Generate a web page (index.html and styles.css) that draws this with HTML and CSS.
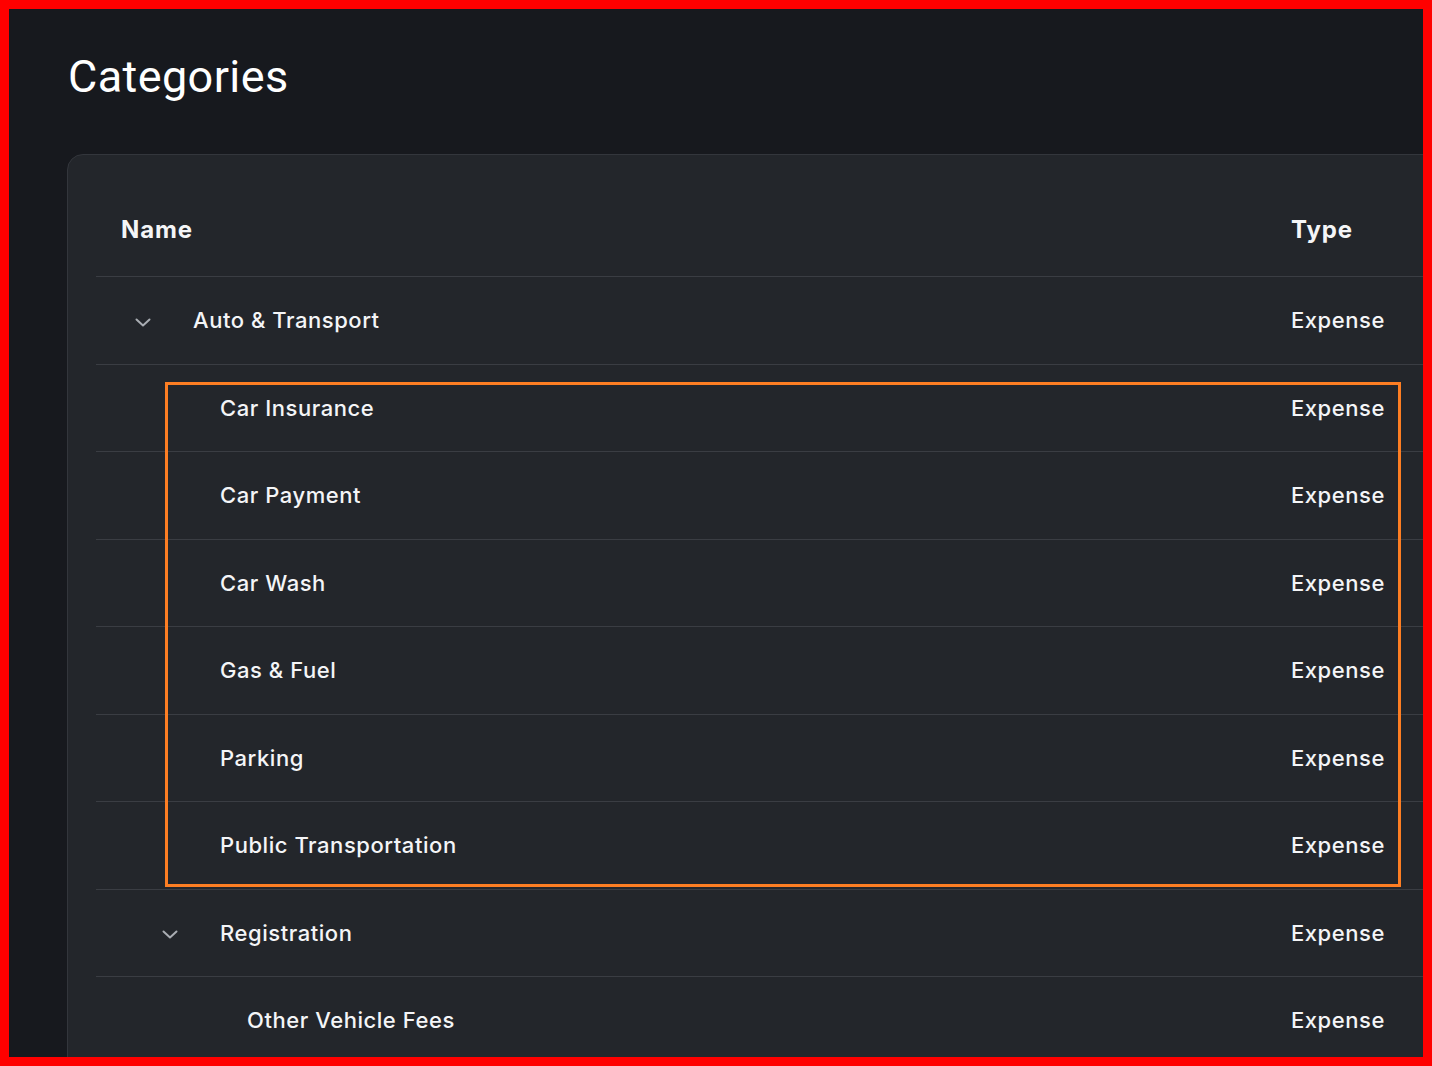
FILE: index.html
```html
<!DOCTYPE html>
<html lang="en">
<head>
<meta charset="utf-8">
<title>Categories</title>
<link rel="stylesheet" href="styles.css">
</head>
<body>
<main class="page">
  <h1 class="title">Categories</h1>
  <section class="card">
    <div class="table">
      <div class="row head">
        <div class="cell name">Name</div>
        <div class="cell type">Type</div>
      </div>
      <div class="row">
        <div class="cell name lvl0"><span class="chev"><svg viewBox="0 0 20 20" width="20" height="20"><path d="M3.5 7.5L10 13.5L16.5 7.5" fill="none" stroke="currentColor" stroke-width="2" stroke-linecap="round" stroke-linejoin="round"/></svg></span>Auto &amp; Transport</div>
        <div class="cell type">Expense</div>
      </div>
      <div class="row">
        <div class="cell name lvl1"><span class="chev"></span>Car Insurance</div>
        <div class="cell type">Expense</div>
      </div>
      <div class="row">
        <div class="cell name lvl1"><span class="chev"></span>Car Payment</div>
        <div class="cell type">Expense</div>
      </div>
      <div class="row">
        <div class="cell name lvl1"><span class="chev"></span>Car Wash</div>
        <div class="cell type">Expense</div>
      </div>
      <div class="row">
        <div class="cell name lvl1"><span class="chev"></span>Gas &amp; Fuel</div>
        <div class="cell type">Expense</div>
      </div>
      <div class="row">
        <div class="cell name lvl1"><span class="chev"></span>Parking</div>
        <div class="cell type">Expense</div>
      </div>
      <div class="row">
        <div class="cell name lvl1"><span class="chev"></span>Public Transportation</div>
        <div class="cell type">Expense</div>
      </div>
      <div class="row">
        <div class="cell name lvl1"><span class="chev"><svg viewBox="0 0 20 20" width="20" height="20"><path d="M3.5 7.5L10 13.5L16.5 7.5" fill="none" stroke="currentColor" stroke-width="2" stroke-linecap="round" stroke-linejoin="round"/></svg></span>Registration</div>
        <div class="cell type">Expense</div>
      </div>
      <div class="row">
        <div class="cell name lvl2"><span class="chev"></span>Other Vehicle Fees</div>
        <div class="cell type">Expense</div>
      </div>
    </div>
  </section>
</main>
<div class="highlight"></div>
<div class="frame"></div>
</body>
</html>
```
FILE: styles.css
```css
* { box-sizing: border-box; }
html, body {
  margin: 0;
  height: 100%;
  overflow: hidden;
  background: #17191e;
}
body {
  font-family: "Inter", "Roboto", sans-serif;
  color: #f4f5f7;
}
.page {
  padding: 0 0 0 67px;
  width: 1500px;
  height: 1066px;
  overflow: hidden;
}
.title {
  margin: 0;
  padding: 50px 0 0 1px;
  height: 154px;
  font-family: "Roboto", sans-serif;
  font-weight: 400;
  font-size: 45px;
  line-height: 54px;
  color: #ffffff;
  letter-spacing: 0.4px;
}
.card {
  width: 1400px;
  background: #23262b;
  border: 1px solid #33363c;
  border-radius: 16px;
  padding: 28px 0 0 28px;
  height: 960px;
}
.table {
  width: 1344px;
}
.row {
  display: grid;
  grid-template-columns: 1fr 174px;
  align-items: center;
  height: 87.5px;
  border-bottom: 1px solid #3a3d43;
  font-size: 22px;
  font-weight: 500;
  letter-spacing: 0.55px;
}
.row.head {
  height: 94px;
  font-weight: 700;
  font-size: 24px;
  letter-spacing: 0.9px;
}
.cell {
  padding-left: 25px;
  display: flex;
  align-items: center;
  white-space: nowrap;
}
.chev {
  display: inline-flex;
  align-items: center;
  justify-content: center;
  width: 20px;
  height: 20px;
  margin-left: 12px;
  margin-right: 40px;
  margin-top: 3px;
  color: #a9adb3;
}
.chev svg { display: block; }
.lvl1 { padding-left: 52px; }
.lvl2 { padding-left: 79px; }
.highlight {
  position: absolute;
  left: 165px;
  top: 382px;
  width: 1236px;
  height: 505px;
  border: 3px solid #fd7e23;
  pointer-events: none;
}
.frame {
  position: fixed;
  inset: 0;
  border: 9px solid #ff0000;
  pointer-events: none;
}
```
